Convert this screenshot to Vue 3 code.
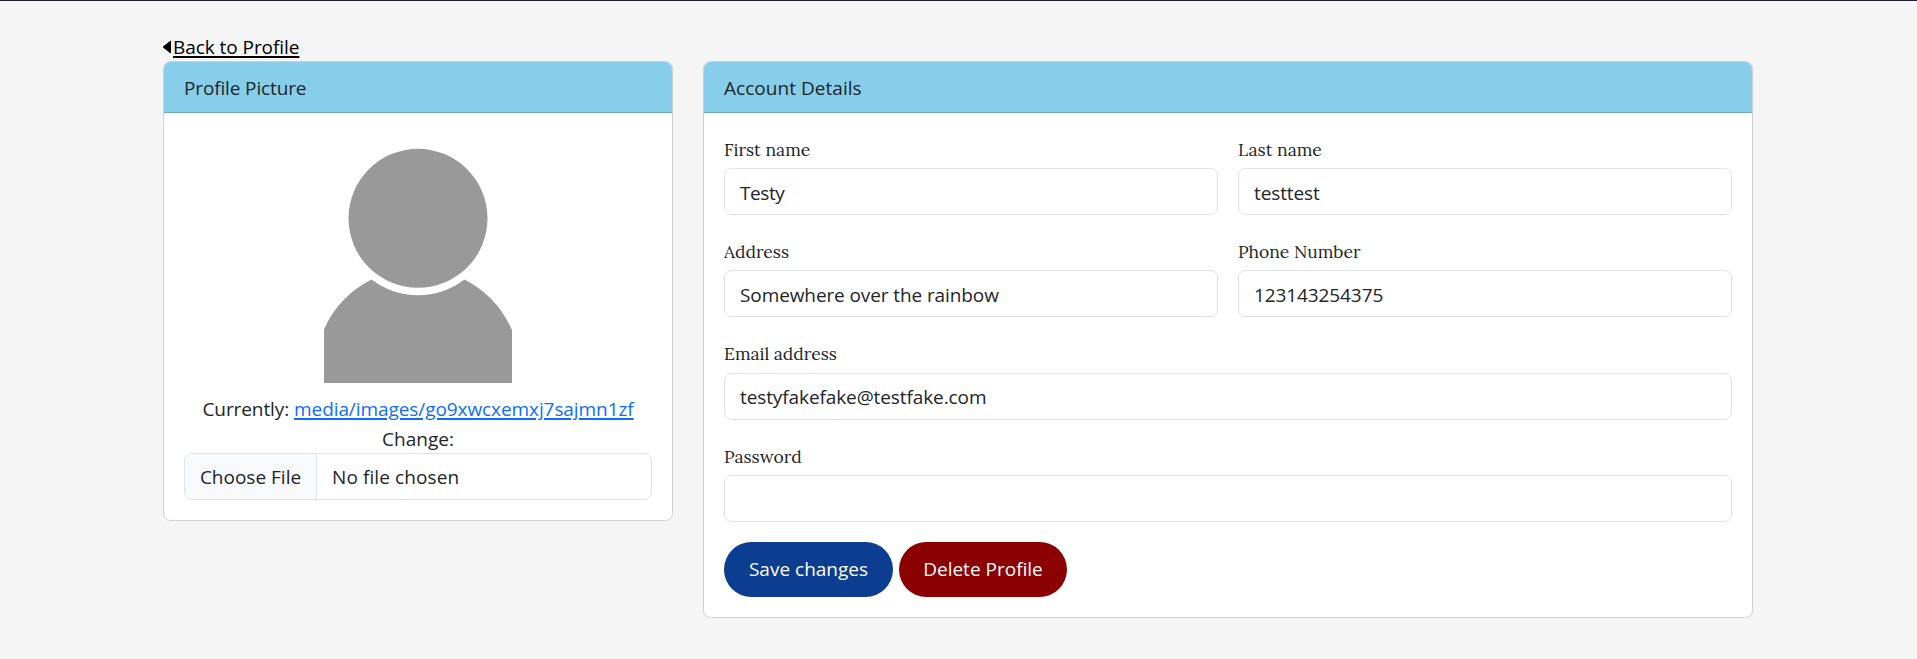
<script setup>
import { ref } from 'vue'

const firstName = ref('Testy')
const lastName = ref('testtest')
const address = ref('Somewhere over the rainbow')
const phone = ref('123143254375')
const email = ref('testyfakefake@testfake.com')
const password = ref('')
</script>

<template>
  <div class="page">
    <nav class="back">
      <svg class="caret" width="8" height="14" viewBox="0 0 8 14"><path d="M8 1.300v11.400c0 .6-.6.800-1 .4L.4 7.700a.9.9 0 0 1 0-1.400L7 .9c.4-.4 1-.2 1 .4z" /></svg>
      <a class="back-link">Back to Profile</a>
    </nav>
    <main class="columns">
      <section class="card">
        <header class="card-header picture-title">Profile Picture</header>
        <div class="card-body centered">
          <svg class="avatar" width="250" height="250" viewBox="0 0 250 250">
            <circle cx="125" cy="85.300" r="69.500" />
            <path d="M31 250V196.200A103.300 103.300 0 0 1 78.500 146.500A76.700 76.700 0 0 0 171.500 146.500A103.300 103.300 0 0 1 219 197.200V250Z" />
          </svg>
          <div class="line current">Currently: <a class="media">media/images/go9xwcxemxj7sajmn1zf</a></div>
          <div class="line">Change:</div>
          <div class="file">
            <span class="choose">Choose File</span>
            <span class="none">No file chosen</span>
          </div>
        </div>
      </section>

      <section class="card">
        <header class="card-header account-title">Account Details</header>
        <form class="card-body form" @submit.prevent>
          <div class="row">
            <div class="field">
              <label for="first">First name</label>
              <input id="first" v-model="firstName" class="short" type="text" />
            </div>
            <div class="field">
              <label for="last">Last name</label>
              <input id="last" v-model="lastName" type="text" />
            </div>
          </div>
          <div class="row">
            <div class="field">
              <label for="address">Address</label>
              <input id="address" v-model="address" type="text" />
            </div>
            <div class="field">
              <label for="phone">Phone Number</label>
              <input id="phone" v-model="phone" type="text" />
            </div>
          </div>
          <div class="field">
            <label for="email">Email address</label>
            <input id="email" v-model="email" type="text" />
          </div>
          <div class="field">
            <label for="password">Password</label>
            <input id="password" v-model="password" type="password" />
          </div>
          <div class="actions">
            <button class="btn save" type="submit">Save changes</button>
            <button class="btn delete" type="button">Delete Profile</button>
          </div>
        </form>
      </section>
    </main>
  </div>
</template>

<style>
body {
  background: #f5f5f5;
}
</style>

<style scoped>
.page,
.page * {
  box-sizing: border-box;
}
.page {
  height: 659px;
  overflow: hidden;
  padding: 30px 163px 0;
  border-top: 1px solid #231f2b;
  background: #f5f5f5;
  color: #212529;
  font: 19px/32px "Segoe UI", "Open Sans", "Noto Sans", sans-serif;
}
.back {
  display: flex;
  align-items: center;
  gap: 2px;
  height: 30px;
  color: #000;
}
.caret {
  flex: none;
  margin-top: 1px;
}
.back-link {
  height: 30px;
  letter-spacing: -0.06px;
  text-decoration: underline;
  text-decoration-thickness: 2px;
  text-underline-offset: 2px;
  text-decoration-skip-ink: none;
}
.columns {
  display: grid;
  grid-template-columns: 510px 1050px;
  gap: 30px;
  align-items: start;
}
.card {
  border: 1px solid #d0d1d2;
  border-radius: 7.5px;
  background: #fff;
  overflow: hidden;
}
.card-header {
  height: 51px;
  padding: 10px 20px;
  background: #87ceeb;
  border-bottom: 1px solid #6fa9c1;
}
.picture-title {
  letter-spacing: -0.14px;
}
.account-title {
  letter-spacing: 0.04px;
}
.card-body {
  padding: 20px;
}
.form {
  padding-top: 19.9px;
}
.centered {
  text-align: center;
}
.avatar {
  display: block;
  margin: 0 auto 10px;
  fill: #999;
}
.line {
  height: 30px;
  white-space: nowrap;
}
.current {
  letter-spacing: -0.08px;
}
.media {
  color: #0d6efd;
  text-decoration: underline;
  text-decoration-thickness: 2px;
  text-underline-offset: 2px;
}
.file {
  display: flex;
  height: 47px;
  border: 1px solid #dee2e6;
  border-radius: 7.5px;
  overflow: hidden;
  line-height: 47px;
}
.choose {
  width: 132px;
  border-right: 1px solid #dee2e6;
  background: #f8f9fa;
}
.none {
  padding-left: 15px;
  letter-spacing: 0.1px;
}
.row {
  display: grid;
  grid-template-columns: 1fr 1fr;
  gap: 20px;
}
.field {
  height: 102.25px;
}
label {
  display: block;
  height: 35.2px;
  line-height: 34px;
  font-family: Lora, "Liberation Serif", serif;
  font-size: 17.5px;
}
input {
  display: block;
  width: 100%;
  height: 47px;
  padding: 2px 15px 0;
  border: 1px solid #dee2e6;
  border-radius: 7.5px;
  background: #fff;
  color: #212529;
  font: inherit;
  letter-spacing: -0.1px;
  outline: 0;
}
input.short {
  letter-spacing: -0.4px;
}
.actions {
  display: flex;
  gap: 6px;
}
.btn {
  width: 169px;
  height: 55px;
  padding: 0;
  border: 0;
  border-radius: 27.5px;
  color: #fff;
  font: inherit;
  white-space: nowrap;
}
.save {
  background: #0b3d91;
}
.delete {
  width: 168px;
  background: #8b0000;
}
</style>
